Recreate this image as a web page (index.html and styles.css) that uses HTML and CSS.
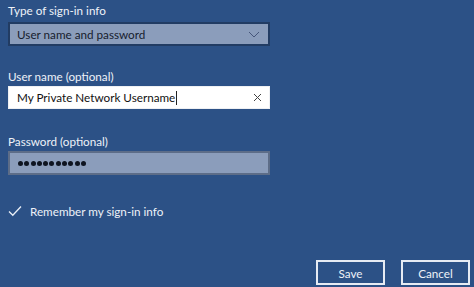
FILE: index.html
```html
<!DOCTYPE html>
<html>
<head>
<meta charset="utf-8">
<link rel="stylesheet" href="styles.css">
</head>
<body>
<div class="page">
  <div class="field">
    <div class="label">Type of sign-in info</div>
    <div class="select">
      <span>User name and password</span>
      <svg class="chev" width="12" height="7" viewBox="0 0 12 7"><path d="M1 1 L6 6 L11 1" fill="none" stroke="#46567a" stroke-width="1"/></svg>
    </div>
  </div>
  <div class="field f2">
    <div class="label">User name (optional)</div>
    <div class="input">
      <span>My Private Network Username<span class="caret"></span></span>
      <svg class="x" width="9" height="9" viewBox="0 0 9 9"><path d="M1 1 L8 8 M8 1 L1 8" stroke="#444" stroke-width="1"/></svg>
    </div>
  </div>
  <div class="field f3">
    <div class="label">Password (optional)</div>
    <div class="pass">
      <span class="dot"></span><span class="dot"></span><span class="dot"></span><span class="dot"></span><span class="dot"></span><span class="dot"></span><span class="dot"></span><span class="dot"></span><span class="dot"></span><span class="dot"></span><span class="dot"></span>
    </div>
  </div>
  <div class="check">
    <svg width="14" height="12" viewBox="0 0 14 12"><path d="M1 6.5 L4.8 10.3 L13 1.5" fill="none" stroke="#e8eef6" stroke-width="1.3"/></svg>
    <span>Remember my sign-in info</span>
  </div>
  <div class="buttons">
    <button class="btn">Save</button>
    <button class="btn">Cancel</button>
  </div>
</div>
</body>
</html>
```
FILE: styles.css
```css
html, body { margin: 0; padding: 0; }
body {
  width: 474px; height: 287px; overflow: hidden;
  background: #2c5186;
  font-family: "Lato", "Open Sans", sans-serif;
  font-size: 11.7px;
  color: #eef2f8;
}
.page { padding: 2px 4px 0 8px; display: flex; flex-direction: column; }
.field { display: flex; flex-direction: column; width: 262px; }
.label { height: 20px; line-height: 17px; }
.select {
  height: 24px; box-sizing: border-box;
  background: #8b9dbb; border: 2px solid #223c63;
  display: flex; align-items: center; justify-content: space-between;
  padding: 0 8px 0 7px; color: #16202e;
}
.f2 { margin-top: 22px; }
.f3 { margin-top: 24px; }
.f2 .label, .f3 .label { height: 18px; }
.input {
  height: 23px; box-sizing: border-box; background: #fff;
  border: 1px solid #eef0f3;
  display: flex; align-items: center; justify-content: space-between;
  padding: 0 7px 0 8px; color: #111;
}
.caret { display: inline-block; width: 1px; height: 14px; background: #222; vertical-align: -3px; margin-left: 1px; }
.pass {
  height: 24px; box-sizing: border-box; background: #8b9dbb;
  border: 2px solid #5d6d88; display: flex; align-items: center; gap: 1.3px; padding: 0 8px;
}
.dot { width: 5px; height: 5px; border-radius: 50%; background: #0e1420; }
.check { margin-top: 29px; display: flex; align-items: center; gap: 8px; height: 14px; }
.check svg { display: block; }
.buttons { margin-top: 42px; display: flex; justify-content: flex-end; gap: 16px; }
.btn {
  width: 69px; height: 25px; box-sizing: border-box;
  background: #2c5186; border: 2px solid #e6ebf3; color: #eef2f8;
  font-family: "Lato", "Open Sans", sans-serif; font-size: 11.7px; padding: 0;
}
```
